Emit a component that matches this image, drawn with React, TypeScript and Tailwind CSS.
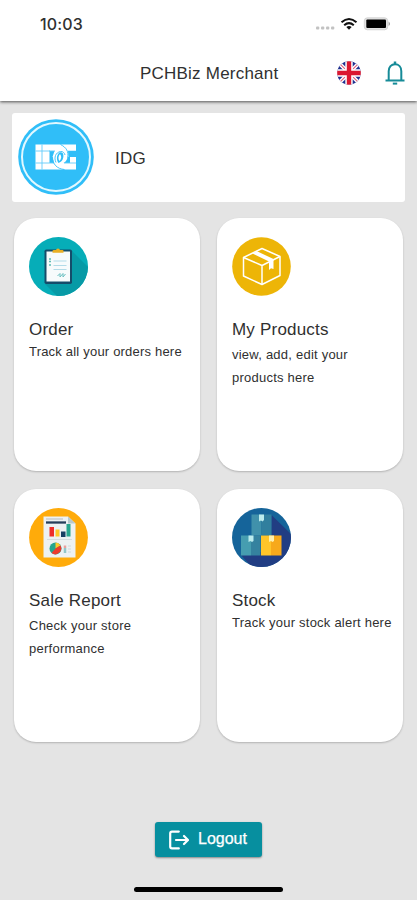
import React from 'react';

function Flag() {
  return (
    <svg className="block size-6" viewBox="0 0 24 24">
      <defs><clipPath id="flag"><circle cx="12" cy="12" r="11.800" /></clipPath></defs>
      <g clipPath="url(#flag)">
        <rect width="24" height="24" fill="#20308f" />
        <path d="M0 0 24 24M24 0 0 24" stroke="#fff" strokeWidth="3.8" />
        <path d="M0 0 24 24M24 0 0 24" stroke="#e0607a" strokeWidth="1.1" />
        <path d="M12 0V24M0 12H24" stroke="#fff" strokeWidth="7.4" />
        <path d="M12 0V24M0 12H24" stroke="#db1730" strokeWidth="4.4" />
      </g>
    </svg>
  );
}

function Bell() {
  return (
    <svg className="block h-6 w-5" viewBox="0 0 20 24" fill="none" stroke="#168b98" strokeWidth="2">
      <path d="M.5 19.500H19.500M3.700 19.500V10.200C3.700 6 6.300 3.300 10 3.300S16.300 6 16.300 10.200V19.500" />
      <path d="M10 .5V3.300" strokeWidth="2.500" />
      <path d="M7.800 22.600H12.200" />
    </svg>
  );
}

function StatusIcons() {
  return (
    <svg className="block h-4 w-[76px]" viewBox="0 0 76 16">
      <g fill="#c2c2c2">
        <rect x="1" y="10.500" width="3.300" height="3" rx="1" />
        <rect x="6" y="10.500" width="3.300" height="3" rx="1" />
        <rect x="11" y="10.500" width="3.300" height="3" rx="1" />
        <rect x="16" y="10.500" width="3.300" height="3" rx="1" />
      </g>
      <g fill="none" stroke="#111" strokeWidth="2">
        <path d="M26.500 6.300Q34 -.4 41.500 6.300" />
        <path d="M29.200 9.300Q34 5 38.800 9.300" />
      </g>
      <path d="M31.300 10.900Q34 8.900 36.700 10.900L34 13.700Z" fill="#111" />
      <rect x="49.300" y="1.800" width="23.400" height="12" rx="3" fill="#e3e3e3" stroke="#c9c9c9" strokeWidth=".7" />
      <rect x="51.300" y="3.500" width="19.700" height="8.500" rx="1" fill="#000" />
      <path d="M73.700 5.500Q76 7.800 73.700 10Z" fill="#888" />
    </svg>
  );
}

function BrandLogo() {
  return (
    <svg className="block size-[76px]" viewBox="0 0 76 76">
      <circle cx="38" cy="38" r="37.800" fill="#30bef8" />
      <circle cx="38" cy="38" r="34" fill="none" stroke="#e2f8ff" strokeWidth="2" />
      <path d="M17.500 25.500H58V31.800H50L50.500 38H58V50.500H17.500Z" fill="#fff" />
      <path d="M31.500 32H36.500L34.500 38 36 44H31.500ZM49.500 38H52V44H45.500Q49 42 49.500 38Z" fill="#30bef8" />
      <g fill="none" stroke="#62ccfa" strokeWidth=".9">
        <path d="M24 25.500V50.500M17.500 32H32M17.500 44H36M46 44H58M31 32H37" />
      </g>
      <g fill="none" stroke="#30bef8" strokeWidth=".9">
        <path d="M42.500 25.500C48.500 28.500 50.700 32.500 49.700 38.500" />
        <path d="M34.500 38C34.500 45 39 50 46.500 50.500" />
        <path d="M38 43.500C35.700 38.500 37.500 33.500 42.500 32.500C45 32.200 46.500 34 47 36" />
      </g>
      <path d="M41.500 33.500C38.500 36 38 40.500 40.500 44C44.500 42.500 46.300 38.500 45 34.500C44 33.300 42.800 33 41.500 33.500Z" fill="#30bef8" />
      <path d="M42 35C40 37.500 40 40 41.500 42C43.500 40 43.800 37 42 35Z" fill="#fff" />
    </svg>
  );
}

function OrderIcon() {
  return (
    <svg className="block size-[59px]" viewBox="0 0 59 59">
      <defs><clipPath id="order"><circle cx="29.500" cy="29.500" r="29.500" /></clipPath></defs>
      <g clipPath="url(#order)">
        <rect width="59" height="59" fill="#06adb8" />
        <path d="M42 13 62 33V62H31L16 47Z" fill="#079aa6" />
        <rect x="15.500" y="12.500" width="27.500" height="34.500" rx="1.800" fill="#154c6a" />
        <rect x="17.500" y="14.500" width="23.500" height="30" fill="#f7fbfc" />
        <path d="M23.500 15.800V14Q23.500 13 25 13H27Q27.300 11.500 29 11.500T31 13H33.500Q34.500 13 34.500 14V15.800Z" fill="#e9af23" />
        <path d="M24.500 24H37.500M24.500 28.500H37.500M24.500 32.500H37.500" stroke="#b2dbe8" strokeWidth="1.200" />
        <path d="M20 22H22M20 24.500H22M20 28H22" stroke="#5dbdb3" strokeWidth="1.500" />
        <path d="M28.500 39 31 36.500V40L34 36.500V40L36.500 37" fill="none" stroke="#68bfc0" />
      </g>
    </svg>
  );
}

function ProductIcon() {
  return (
    <svg className="block size-[59px]" viewBox="0 0 59 59">
      <circle cx="29.500" cy="29.500" r="29.300" fill="#edb507" />
      <g fill="none" stroke="#fff" strokeWidth="1.500" strokeLinejoin="round">
        <path d="M11.500 20.500 30 11.500 48 19.500V38.500L30 47.500 11.500 39Z" />
        <path d="M11.500 20.500 30 28.500 48 19.500M30 28.500V47.500" />
      </g>
      <path d="M20.500 16.500 25 14.300 41.500 22V32L39 31.200 37 33V24.500Z" fill="#fff" />
    </svg>
  );
}

function ReportIcon() {
  return (
    <svg className="block size-[59px]" viewBox="0 0 59 59">
      <circle cx="29.500" cy="29.500" r="29.400" fill="#ffab0a" />
      <path d="M14.500 8.500H39L46.500 15.500V49.500H14.500Z" fill="#edf1f2" />
      <path d="M39 8.500V15.500H46.500Z" fill="#b8c9cd" />
      <path d="M17 11H34" stroke="#b7babd" />
      <path d="M17 14.500H37" stroke="#263f5b" strokeWidth="2.300" />
      <path d="M18 31.500H43" stroke="#c8d4d7" strokeWidth=".7" />
      <rect x="20.500" y="19" width="4.500" height="9.500" fill="#ee2e29" />
      <rect x="26.500" y="21.500" width="4" height="7" fill="#ffc928" />
      <rect x="32" y="23.500" width="4.500" height="5.500" fill="#173e62" />
      <rect x="37.500" y="16" width="4" height="12.500" fill="#27a58e" />
      <circle cx="26.500" cy="40.500" r="6" fill="#26a58d" />
      <path d="M26.500 40.500V34.500A6 6 0 0 1 31.500 37.500Z" fill="#ffc928" />
      <path d="M26.500 40.500 31.500 37.500A6 6 0 0 1 22.500 45Z" fill="#ed3b2d" />
      <path d="M36 37.500V40" stroke="#e8a09d" strokeWidth="2.500" />
      <path d="M36 40V45" stroke="#92c6c8" strokeWidth="2.500" />
      <path d="M39 38H42M39 41H42M39 44H42" stroke="#cfdadd" />
    </svg>
  );
}

function StockIcon() {
  return (
    <svg className="block size-[59px]" viewBox="0 0 59 59">
      <defs><clipPath id="stock"><circle cx="29.500" cy="29.500" r="29.500" /></clipPath></defs>
      <g clipPath="url(#stock)">
        <rect width="59" height="59" fill="#15649a" />
        <path d="M39.500 7 65 32V65H25L9 47V44H39Z" fill="#213d83" />
        <rect x="19.500" y="6.500" width="10" height="21" fill="#4091ab" />
        <rect x="29.500" y="6.500" width="10" height="21" fill="#317f9e" />
        <rect x="9" y="27.500" width="10" height="20" fill="#469db0" />
        <rect x="19" y="27.500" width="9.500" height="20" fill="#35829f" />
        <rect x="29" y="27.500" width="10" height="20" fill="#ffc529" />
        <rect x="39" y="27.500" width="10.500" height="20" fill="#f7a91b" />
        <path d="M27 6.500H32V12L30.500 13.500 29 12.500 27 13.500ZM16.500 27.500H21.500V33L20 34 18.500 33 16.500 34Z" fill="#bcecee" />
        <path d="M37 27.500H42V33L40.500 34 39 33 37 34Z" fill="#fff0ad" />
      </g>
    </svg>
  );
}

function LogoutIcon() {
  return (
    <svg className="block size-5" viewBox="0 0 20 20" fill="none" stroke="#fff" strokeWidth="2.200" strokeLinecap="round" strokeLinejoin="round">
      <path d="M9.800 1.600H3Q1.200 1.600 1.200 3.400V16.600Q1.200 18.400 3 18.400H9.800M7 10H19M15 6 19 10 15 14" />
    </svg>
  );
}

type CardProps = { icon: React.ReactNode; title: string; children: React.ReactNode };

function Card({ icon, title, children }: CardProps) {
  return (
    <section className="h-[253px] rounded-[22px] bg-white pl-[15px] pt-[19px] shadow-[0_1px_2px_rgba(0,0,0,0.22)]">
      {icon}
      <h2 className="mt-[23px] whitespace-nowrap text-[17px] font-normal leading-[21px] tracking-[0.2px]">{title}</h2>
      {children}
    </section>
  );
}

export default function App() {
  return (
    <main className="flex h-[900px] w-[417px] flex-col overflow-hidden bg-[#e4e4e4] font-['Liberation_Sans',sans-serif] text-[#303030]">
      <header className="relative h-[101px] shrink-0 bg-white shadow-[0_1px_3px_rgba(0,0,0,0.65)]">
        <div className="flex h-[46px] items-start justify-between pl-10 pr-[26px] pt-4">
          <time className="font-['Inter',sans-serif] text-[16px] font-medium leading-4 tracking-[0.15px]">10:03</time>
          <StatusIcons />
        </div>
        <div className="flex h-[54px] items-center pl-[140px] pr-3">
          <h1 className="mt-0.5 w-[197px] whitespace-nowrap text-[17px] font-normal tracking-[0.22px]">PCHBiz Merchant</h1>
          <Flag />
          <div className="ml-auto"><Bell /></div>
        </div>
      </header>
      <section className="mx-3 mt-3 flex h-[89px] shrink-0 items-center rounded-[3px] bg-white pb-px pl-1.5">
        <BrandLogo />
        <span className="ml-[21px] mt-[3px] text-[17px] tracking-[0.2px]">IDG</span>
      </section>
      <div className="ml-3.5 mt-4 grid shrink-0 grid-cols-[186px_186px] gap-x-[17px] gap-y-[18px]">
        <Card icon={<OrderIcon />} title="Order">
          <p className="whitespace-nowrap text-[13px] leading-6 tracking-[0.2px]">Track all your orders here</p>
        </Card>
        <Card icon={<ProductIcon />} title="My Products">
          <p className="pt-1 text-[13px] leading-[22.5px] tracking-[0.23px]">view, add, edit your<br />products here</p>
        </Card>
        <Card icon={<ReportIcon />} title="Sale Report">
          <p className="pt-1 text-[13px] leading-[22.5px] tracking-[0.25px]">Check your store<br />performance</p>
        </Card>
        <Card icon={<StockIcon />} title="Stock">
          <p className="whitespace-nowrap text-[13px] leading-6 tracking-[0.23px]">Track your stock alert here</p>
        </Card>
      </div>
      <button className="mx-auto mt-20 flex h-[35px] w-[107px] shrink-0 items-center rounded-[3px] bg-[#078f9f] pl-3.5 text-[16px] text-white shadow-[0_1px_2px_rgba(0,0,0,0.4)]">
        <LogoutIcon />
        <span className="-mt-px ml-[9px] [-webkit-text-stroke:0.25px_white]">Logout</span>
      </button>
      <div className="mx-auto mt-[30px] h-[5px] w-[149px] shrink-0 rounded-full bg-black" />
    </main>
  );
}
